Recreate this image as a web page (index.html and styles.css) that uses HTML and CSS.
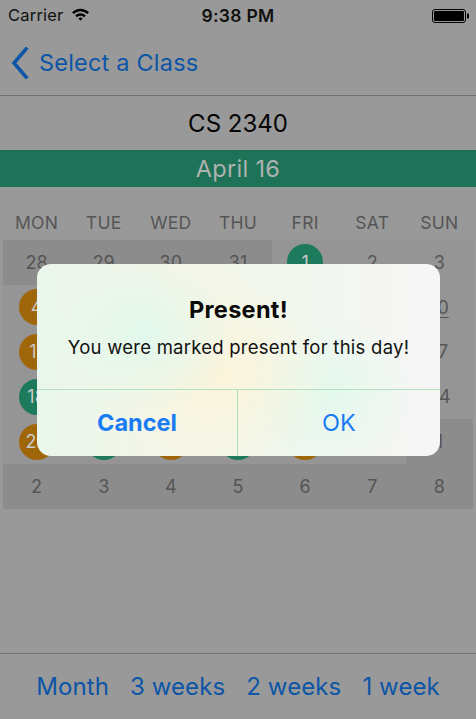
FILE: index.html
```html
<!DOCTYPE html>
<html>
<head>
<meta charset="utf-8">
<link rel="stylesheet" href="styles.css">
</head>
<body>
<div class="screen">
  <div class="status">
    <div class="status-left">
      <span class="carrier">Carrier</span>
      <svg class="wifi" width="19" height="14" viewBox="0 0 19 14">
        <path d="M1 5.2 A12 12 0 0 1 18 5.2 L16.2 7 A9.5 9.5 0 0 0 2.8 7 Z" fill="#000"/>
        <path d="M4.2 8.4 A7.5 7.5 0 0 1 14.8 8.4 L13 10.2 A5 5 0 0 0 6 10.2 Z" fill="#000"/>
        <path d="M7.4 11.6 A3 3 0 0 1 11.6 11.6 L9.5 13.7 Z" fill="#000"/>
      </svg>
    </div>
    <div class="time">9:38 PM</div>
    <div class="status-right">
      <svg width="38" height="14" viewBox="0 0 38 14">
        <rect x="0.5" y="0.5" width="33" height="13" rx="2.5" fill="none" stroke="#000" stroke-width="1"/>
        <rect x="2" y="2" width="30" height="10" rx="1.2" fill="#000"/>
        <path d="M35 4.5 h1 a1 1 0 0 1 1 1 v3 a1 1 0 0 1 -1 1 h-1 z" fill="#000"/>
      </svg>
    </div>
  </div>

  <div class="nav">
    <svg class="chevron" width="18" height="32" viewBox="0 0 18 32">
      <path d="M15 2 L3 16 L15 30" fill="none" stroke="#0c55a7" stroke-width="3.6" stroke-linecap="square" stroke-linejoin="miter"/>
    </svg>
    <span class="back-label">Select a Class</span>
  </div>

  <div class="course">CS 2340</div>
  <div class="month-bar">April 16</div>

  <div class="weekdays">
    <span>MON</span><span>TUE</span><span>WED</span><span>THU</span><span>FRI</span><span>SAT</span><span>SUN</span>
  </div>

  <div class="calendar">
    <div class="cell out">28</div>
    <div class="cell out">29</div>
    <div class="cell out">30</div>
    <div class="cell out">31</div>
    <div class="cell"><span class="dot green">1</span></div>
    <div class="cell">2</div>
    <div class="cell">3</div>

    <div class="cell"><span class="dot orange">4</span></div>
    <div class="cell"><span class="dot green">5</span></div>
    <div class="cell"><span class="dot orange">6</span></div>
    <div class="cell"><span class="dot green">7</span></div>
    <div class="cell"><span class="dot orange">8</span></div>
    <div class="cell">9</div>
    <div class="cell"><span class="today">10</span></div>

    <div class="cell"><span class="dot orange">11</span></div>
    <div class="cell"><span class="dot green">12</span></div>
    <div class="cell"><span class="dot orange">13</span></div>
    <div class="cell"><span class="dot green">14</span></div>
    <div class="cell"><span class="dot orange">15</span></div>
    <div class="cell">16</div>
    <div class="cell">17</div>

    <div class="cell"><span class="dot green">18</span></div>
    <div class="cell"><span class="dot green">19</span></div>
    <div class="cell"><span class="dot orange">20</span></div>
    <div class="cell"><span class="dot green">21</span></div>
    <div class="cell"><span class="dot orange">22</span></div>
    <div class="cell">23</div>
    <div class="cell">24</div>

    <div class="cell"><span class="dot orange">25</span></div>
    <div class="cell"><span class="dot green">26</span></div>
    <div class="cell"><span class="dot orange">27</span></div>
    <div class="cell"><span class="dot green">28</span></div>
    <div class="cell"><span class="dot orange">29</span></div>
    <div class="cell">30</div>
    <div class="cell out">1</div>

    <div class="cell out">2</div>
    <div class="cell out">3</div>
    <div class="cell out">4</div>
    <div class="cell out">5</div>
    <div class="cell out">6</div>
    <div class="cell out">7</div>
    <div class="cell out">8</div>
  </div>

  <div class="spacer"></div>

  <div class="toolbar">
    <span>Month</span>
    <span>3 weeks</span>
    <span>2 weeks</span>
    <span>1 week</span>
  </div>

  <div class="alert">
    <div class="alert-body">
      <div class="alert-title">Present!</div>
      <div class="alert-msg">You were marked present for this day!</div>
    </div>
    <div class="alert-actions">
      <div class="alert-btn cancel">Cancel</div>
      <div class="alert-btn ok">OK</div>
    </div>
  </div>
</div>
</body>
</html>
```

FILE: styles.css
```css
* { box-sizing: border-box; }
html, body { margin: 0; padding: 0; }
body {
  background: #999999;
  font-family: "Inter", "Roboto", "Liberation Sans", sans-serif;
}
.screen {
  position: relative;
  width: 476px;
  height: 719px;
  display: flex;
  flex-direction: column;
  background: #999999;
  overflow: hidden;
}

/* status bar */
.status {
  height: 30px;
  display: flex;
  align-items: center;
  justify-content: space-between;
  padding: 0 6px 0 8px;
  position: relative;
}
.status-left { display: flex; align-items: center; gap: 8px; }
.carrier { font-size: 16.5px; color: #111; letter-spacing: 0.2px; }
.wifi { margin-top: -2px; }
.time {
  position: absolute;
  left: 0; right: 0;
  text-align: center;
  font-size: 17.5px;
  font-weight: 600;
  color: #111;
  letter-spacing: 0.3px;
  pointer-events: none;
}
.status-right { display: flex; align-items: center; padding-top: 1px; }

/* nav */
.nav {
  height: 66px;
  display: flex;
  align-items: center;
  padding-left: 11px;
  gap: 10px;
  border-bottom: 1px solid #6f6f6f;
}
.chevron { margin-top: 1px; }
.back-label {
  font-size: 23.5px;
  color: #0c55a7;
  letter-spacing: 0.2px;
}

.course {
  height: 54px;
  display: flex;
  align-items: center;
  justify-content: center;
  font-size: 24px;
  color: #050505;
  padding-top: 1px;
}
.month-bar {
  height: 37px;
  background: #1e7258;
  color: #aeb2b0;
  display: flex;
  align-items: center;
  justify-content: center;
  font-size: 23.5px;
  letter-spacing: 0.3px;
}

.weekdays {
  height: 53px;
  display: grid;
  grid-template-columns: repeat(7, 1fr);
  padding: 25px 3px 0;
  font-size: 17.5px;
  color: #555;
  text-align: center;
  letter-spacing: 0.3px;
}

.calendar {
  margin: 0 3px;
  display: grid;
  grid-template-columns: repeat(7, 1fr);
  grid-auto-rows: 44.8px;
  background: #959595;
}
.cell {
  display: flex;
  align-items: center;
  justify-content: center;
  font-size: 18px;
  color: #555;
}
.cell.out { background: #8c8c8c; }
.dot {
  width: 36px;
  height: 36px;
  border-radius: 50%;
  display: flex;
  align-items: center;
  justify-content: center;
  color: #cacaca;
}
.dot.green { background: #1e7a5c; }
.dot.orange { background: #a0660a; }
.today { text-decoration: underline; text-underline-offset: 3px; }

.spacer { flex: 1; border-bottom: 1px solid #6f6f6f; }

.toolbar {
  height: 65px;
  display: flex;
  align-items: center;
  justify-content: center;
  gap: 21px;
  font-size: 24px;
  color: #0c55a7;
  letter-spacing: 0.1px;
}

/* alert (overlays the dimmed content) */
.alert {
  position: absolute;
  left: 37px;
  top: 264px;
  width: 403px;
  height: 192px;
  border-radius: 14px;
  overflow: hidden;
  display: flex;
  flex-direction: column;
  background:
    radial-gradient(ellipse 90px 80px at 110px 70px, rgba(224,248,236,0.95), rgba(224,248,236,0) 100%),
    radial-gradient(ellipse 110px 100px at 185px 110px, rgba(252,244,218,0.95), rgba(252,244,218,0) 100%),
    radial-gradient(ellipse 90px 80px at 290px 130px, rgba(226,249,236,0.95), rgba(226,249,236,0) 100%),
    linear-gradient(90deg, #eaf7ec 0%, #f5f6e8 35%, #f1f7ee 60%, #f5f6f3 85%, #f6f6f6 100%);
}
.alert-body {
  height: 126px;
  display: flex;
  flex-direction: column;
  align-items: center;
  padding-top: 31px;
  border-bottom: 1px solid #b5e2bd;
}
.alert-title {
  font-size: 23.5px;
  font-weight: 700;
  color: #0a0a0a;
  letter-spacing: 0.3px;
}
.alert-msg {
  margin-top: 12px;
  font-size: 18.5px;
  color: #111;
  letter-spacing: 0.25px;
}
.alert-actions {
  flex: 1;
  display: grid;
  grid-template-columns: 201px 1fr;
}
.alert-btn {
  display: flex;
  align-items: center;
  justify-content: center;
  font-size: 23.5px;
  color: #1a7cf4;
  padding-bottom: 1px;
}
.alert-btn.cancel { font-weight: 700; border-right: 1px solid #a9e0b8; }
```
